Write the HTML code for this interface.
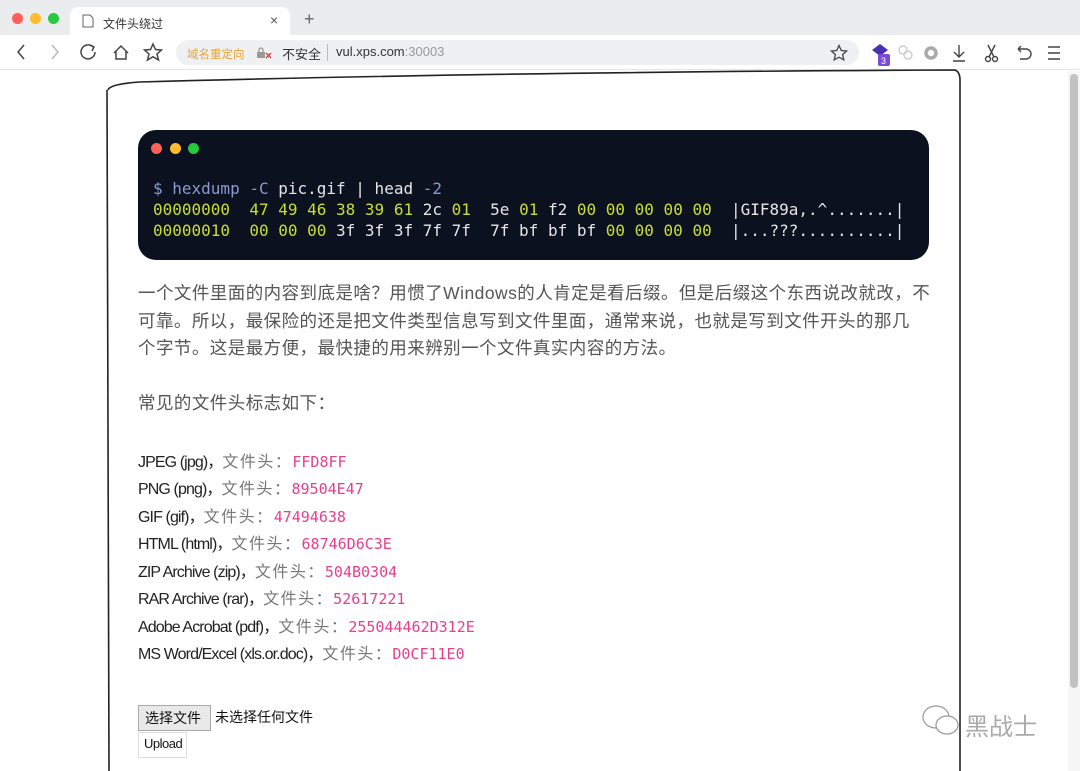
<!DOCTYPE html>
<html><head><meta charset="utf-8"><style>
*{margin:0;padding:0;box-sizing:border-box}
body{width:1080px;height:771px;overflow:hidden;background:#fff;font-family:"Liberation Sans","Noto Sans CJK SC",sans-serif;position:relative}
.abs{position:absolute}
.tabbar{left:0;top:0;width:1080px;height:35px;background:#ebecee}
.tab{left:70px;top:7px;width:220px;height:29px;background:#fff;border-radius:8px 8px 0 0;font-size:12px;color:#333}
.toolbar{left:0;top:35px;width:1080px;height:35px;background:#fff;border-bottom:1px solid #e4e4e4}
.url{left:176px;top:40px;width:683px;height:25px;background:#eff0f2;border-radius:13px;font-size:13px}
.term{left:138px;top:130px;width:791px;height:130px;background:#0c1120;border-radius:18px}
.mono{font-family:"DejaVu Sans Mono","Liberation Mono",monospace}
.code{left:153px;top:178px;font-size:16px;line-height:21px;color:#e6e6e6;white-space:pre}
.y{color:#c8de2c}.b{color:#8a9ad0}
.p{left:138px;color:#555;font-size:17.5px;letter-spacing:0.45px;line-height:27.5px;width:820px;white-space:nowrap}
.li{left:138px;font-size:16px;color:#222;letter-spacing:-0.9px;white-space:pre}
.li span.c{color:#777;letter-spacing:1.5px}
.li span.h{color:#e83e8c;font-family:"DejaVu Sans Mono",monospace;letter-spacing:0;font-size:15px}
</style></head><body>
<div class="abs tabbar"></div>
<div class="abs" style="left:12px;top:13px;width:11px;height:11px;border-radius:50%;background:#fe5f57"></div>
<div class="abs" style="left:30px;top:13px;width:11px;height:11px;border-radius:50%;background:#febc2e"></div>
<div class="abs" style="left:48px;top:13px;width:11px;height:11px;border-radius:50%;background:#28c840"></div>
<div class="abs tab"><svg class="abs" style="left:12px;top:7px" width="12" height="14"><path d="M1 1h7l3 3v9H1z" fill="none" stroke="#666"/></svg><span class="abs" style="left:33px;top:8px">文件头绕过</span><span class="abs" style="left:200px;top:5px;font-size:14px;color:#555">×</span></div>
<div class="abs" style="left:304px;top:9px;font-size:18px;color:#666">+</div>
<div class="abs toolbar"></div>
<svg class="abs" style="left:0;top:35px" width="176" height="35" fill="none" stroke="#444" stroke-width="1.5">
<path d="M24 10l-6 7 6 7"/><path d="M52 10l6 7-6 7" stroke="#bbb"/>
<path d="M93 12a7 7 0 1 0 2 5" /><path d="M90 10l4 2-2 4"/>
<path d="M114 18l7-7 7 7M116 16v8h10v-8"/>
<path d="M153 9l2.5 5.5 6 .5-4.5 4 1.5 6-5.5-3.3-5.5 3.3 1.5-6-4.5-4 6-.5z"/></svg>
<div class="abs url"><span class="abs" style="left:11px;top:6px;font-size:11.5px;color:#e8a33a">域名重定向</span>
<svg class="abs" style="left:80px;top:6px" width="18" height="14"><rect x="1" y="6" width="8" height="6" fill="#999"/><path d="M3 6V4a2 2 0 0 1 4 0v2" fill="none" stroke="#999" stroke-width="1.3"/><path d="M10 7l5 5M15 7l-5 5" stroke="#e33" stroke-width="1.4"/></svg>
<span class="abs" style="left:106px;top:4px;color:#333">不安全</span><span class="abs" style="left:151px;top:4px;width:1px;height:17px;background:#bbb"></span>
<span class="abs" style="left:160px;top:4px;color:#333">vul.xps.com<span style="color:#999">:30003</span></span>
<svg class="abs" style="left:654px;top:4px" width="18" height="18" fill="none" stroke="#444" stroke-width="1.3"><path d="M9 1.5l2.3 5 5.3.5-4 3.6 1.2 5.3L9 13.2l-4.8 2.7 1.2-5.3-4-3.6 5.3-.5z"/></svg></div>
<svg class="abs" style="left:866px;top:40px" width="214" height="30" fill="none" stroke="#444" stroke-width="1.4">
<path d="M6 10l8-6 8 6-8 6z" fill="#4a2fb0" stroke="none"/><rect x="12" y="14" width="12" height="12" rx="2" fill="#7c4ad6" stroke="none"/><text x="15" y="24" font-size="9" fill="#fff" stroke="none" font-family="Liberation Sans">3</text>
<circle cx="37" cy="10" r="4" stroke="#ccc"/><circle cx="42" cy="15" r="4" stroke="#ccc"/>
<circle cx="65" cy="13" r="5" stroke="#aaa" stroke-width="3.5"/>
<path d="M93 5v12M88 12l5 5 5-5M87 21h12"/>
<circle cx="122" cy="19" r="2.5"/><circle cx="129" cy="19" r="2.5"/><path d="M123 17l6-12M128 17l-6-12"/>
<path d="M152 9h8a5 5 0 0 1 0 10h-6"/><path d="M152 9l3-3M152 9l3 3"/>
<path d="M182 7h12M182 13h12M182 19h12"/></svg>
<div class="abs" style="left:1068px;top:71px;width:12px;height:700px;background:#f6f6f6"></div>
<div class="abs" style="left:1070px;top:74px;width:8px;height:614px;background:#c2c2c2;border-radius:4px"></div>
<svg class="abs" style="left:0;top:0" width="1080" height="771" fill="none" stroke="#222" stroke-width="1.6">
<path d="M108 90Q110 84 140 82Q500 72 955 70Q960 72 960 80L960 771"/><path d="M107 90L109 771"/></svg>
<div class="abs term"></div>
<div class="abs" style="left:151px;top:143px;width:11px;height:11px;border-radius:50%;background:#fe5f57"></div>
<div class="abs" style="left:170px;top:143px;width:11px;height:11px;border-radius:50%;background:#febc2e"></div>
<div class="abs" style="left:188px;top:143px;width:11px;height:11px;border-radius:50%;background:#28c840"></div>
<div class="abs code mono"><span class="b">$ hexdump -C</span> pic.gif | head <span class="b">-2</span>
<span class="y">00000000  47 49 46 38 39 61</span> 2c <span class="y">01</span>  5e <span class="y">01</span> f2 <span class="y">00 00 00 00 00</span>  |GIF89a,.^.......|
<span class="y">00000010  00 00 00</span> 3f 3f 3f 7f 7f  7f bf bf bf <span class="y">00 00 00 00</span>  |...???..........|</div>
<div class="abs p" style="top:280px">一个文件里面的内容到底是啥？用惯了Windows的人肯定是看后缀。但是后缀这个东西说改就改，不<br>可靠。所以，最保险的还是把文件类型信息写到文件里面，通常来说，也就是写到文件开头的那几<br>个字节。这是最方便，最快捷的用来辨别一个文件真实内容的方法。</div>
<div class="abs p" style="top:390px">常见的文件头标志如下：</div>
<div class="abs li" style="top:448px">JPEG (jpg)，<span class="c">文件头：</span><span class="h">FFD8FF</span></div>
<div class="abs li" style="top:475px">PNG (png)，<span class="c">文件头：</span><span class="h">89504E47</span></div>
<div class="abs li" style="top:503px">GIF (gif)，<span class="c">文件头：</span><span class="h">47494638</span></div>
<div class="abs li" style="top:530px">HTML (html)，<span class="c">文件头：</span><span class="h">68746D6C3E</span></div>
<div class="abs li" style="top:558px">ZIP Archive (zip)，<span class="c">文件头：</span><span class="h">504B0304</span></div>
<div class="abs li" style="top:585px">RAR Archive (rar)，<span class="c">文件头：</span><span class="h">52617221</span></div>
<div class="abs li" style="top:613px">Adobe Acrobat (pdf)，<span class="c">文件头：</span><span class="h">255044462D312E</span></div>
<div class="abs li" style="top:640px">MS Word/Excel (xls.or.doc)，<span class="c">文件头：</span><span class="h">D0CF11E0</span></div>
<div class="abs" style="left:138px;top:705px;width:73px;height:26px;background:#e9e9e9;border:1px solid #aaa;font-size:14px;padding:2px 6px;color:#111">选择文件</div>
<div class="abs" style="left:215px;top:707px;font-size:14px;color:#111">未选择任何文件</div>
<div class="abs" style="left:138px;top:732px;width:49px;height:26px;background:#fff;border:1px solid #ddd;font-size:13px;padding:3px 5px;letter-spacing:-0.5px;color:#111">Upload</div>
<svg class="abs" style="left:920px;top:703px" width="42" height="36" fill="none" stroke="#999" stroke-width="1.2"><ellipse cx="16" cy="14" rx="13" ry="11"/><ellipse cx="27" cy="22" rx="11" ry="9" fill="#fff"/></svg>
<div class="abs" style="left:965px;top:707px;font-size:24px;color:#aaa">黑战士</div>
</body></html>
